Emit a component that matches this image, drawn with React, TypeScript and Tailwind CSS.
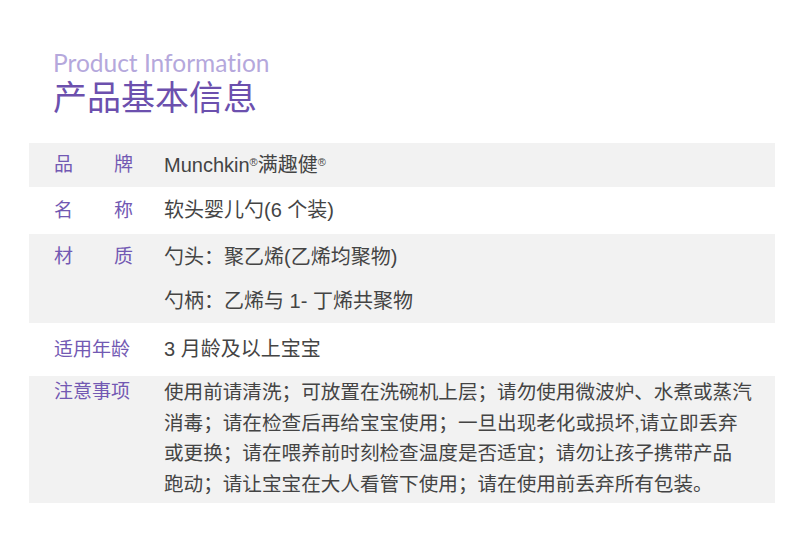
const CJK = "font-['Liberation_Sans','Noto_Sans_CJK_SC',sans-serif]";

function Label({ text, spread }: { text: string; spread?: boolean }) {
  if (spread) {
    return (
      <div className="w-[79px] flex justify-between text-[19px] text-[#7259b3]">
        {text.split("").map((c) => (
          <span key={c}>{c}</span>
        ))}
      </div>
    );
  }
  return <div className="text-[19px] text-[#7259b3] whitespace-nowrap">{text}</div>;
}

function Row({
  label,
  spread,
  gray,
  className,
  children,
}: {
  label: string;
  spread?: boolean;
  gray?: boolean;
  className: string;
  children: React.ReactNode;
}) {
  return (
    <div className={`flex ${gray ? "bg-[#f2f2f2]" : "bg-white"} ${className}`}>
      <div className="w-[135px] shrink-0 pl-[25px]">
        <Label text={label} spread={spread} />
      </div>
      <div className="text-[20px] text-[#444444]">{children}</div>
    </div>
  );
}

export default function App() {
  return (
    <div className={`w-[791px] h-[535px] bg-white overflow-hidden px-[29px] pt-[48px] ${CJK}`}>
      <div className="pl-[24px]">
        <div className="font-['Lato',sans-serif] text-[24.5px] leading-[30px] text-[#b5a8dc] [font-variant-ligatures:none]">
          Product Information
        </div>
        <div className="text-[34px] leading-[40px] text-[#6c50ae]">产品基本信息</div>
      </div>
      <div className="mt-[25px] w-[746px]">
        <Row label="品牌" spread gray className="h-[44px] items-center leading-[44px]">
          Munchkin
          <span className="text-[11px] align-top relative top-[-3px]">®</span>满趣健
          <span className="text-[11px] align-top relative top-[-3px]">®</span>
        </Row>
        <Row label="名称" spread className="h-[47px] items-center leading-[47px]">
          软头婴儿勺(6 个装)
        </Row>
        <Row label="材质" spread gray className="h-[89px] pt-[1px] leading-[44px]">
          <div>勺头：聚乙烯(乙烯均聚物)</div>
          <div>勺柄：乙烯与 1- 丁烯共聚物</div>
        </Row>
        <Row label="适用年龄" className="h-[53px] items-center leading-[53px]">
          3 月龄及以上宝宝
        </Row>
        <Row label="注意事项" gray className="h-[127px] pt-[1px] leading-[30.6px]">
          <div className="text-[19.6px]">
            <div className="whitespace-nowrap">使用前请清洗；可放置在洗碗机上层；请勿使用微波炉、水煮或蒸汽</div>
            <div className="whitespace-nowrap">消毒；请在检查后再给宝宝使用；一旦出现老化或损坏,请立即丢弃</div>
            <div className="whitespace-nowrap">或更换；请在喂养前时刻检查温度是否适宜；请勿让孩子携带产品</div>
            <div className="whitespace-nowrap">跑动；请让宝宝在大人看管下使用；请在使用前丢弃所有包装。</div>
          </div>
        </Row>
      </div>
    </div>
  );
}
